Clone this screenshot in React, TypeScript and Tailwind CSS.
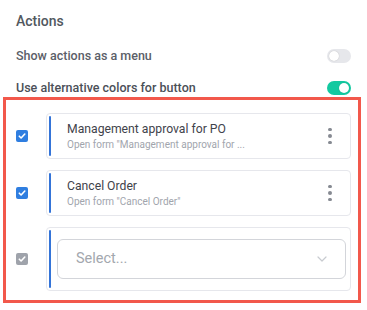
import React from "react";

const Toggle = ({ on }: { on: boolean }) => (
  <div
    className={`flex h-[14px] w-[24px] items-center rounded-full px-[2px] ${
      on ? "justify-end bg-[#13c9a0]" : "justify-start bg-[#e6e7eb]"
    }`}
  >
    <div className="h-[10px] w-[10px] rounded-full bg-white shadow-[0_0_1px_rgba(0,0,0,0.25)]" />
  </div>
);

const Check = ({ muted }: { muted?: boolean }) => (
  <div
    className={`flex h-[12px] w-[12px] items-center justify-center rounded-[2px] ${
      muted ? "bg-[#9fa3ab]" : "bg-[#2f7ee0]"
    }`}
  >
    <svg width="8" height="8" viewBox="0 0 8 8" fill="none">
      <path d="M1.3 4.2 3.1 6 6.8 2" stroke="white" strokeWidth="1.6" strokeLinecap="round" strokeLinejoin="round" />
    </svg>
  </div>
);

const Kebab = () => (
  <div className="flex flex-col items-center gap-[3px]">
    <span className="h-[3.5px] w-[3.5px] rounded-full bg-[#868a92]" />
    <span className="h-[3.5px] w-[3.5px] rounded-full bg-[#868a92]" />
    <span className="h-[3.5px] w-[3.5px] rounded-full bg-[#868a92]" />
  </div>
);

const ActionCard = ({ title, sub }: { title: string; sub: string }) => (
  <div className="flex h-[46px] w-[305px] rounded-[4px] border border-[#e6e7ec] bg-white p-[2px]">
    <div className="w-[2px] rounded-full bg-[#3474d8]" />
    <div className="flex flex-1 flex-col justify-center pl-[16px] pt-[1px]">
      <div className="text-[12.2px] leading-[17px] text-[#3f434b]">{title}</div>
      <div className="text-[10px] leading-[14px] text-[#a1a5ad]">{sub}</div>
    </div>
    <div className="flex w-[36px] items-center justify-center">
      <Kebab />
    </div>
  </div>
);

const App = () => {
  return (
    <div
      className="h-[310px] w-[367px] overflow-hidden bg-white"
      style={{ fontFamily: "Roboto, 'Liberation Sans', sans-serif" }}
    >
      <div className="flex h-[42px] items-center px-4 text-[14px] font-medium text-[#525860]">
        Actions
      </div>
      <div className="flex h-[28px] items-center justify-between pl-4 pr-[16px] text-[12.5px] font-medium text-[#5b6068]">
        <span>Show actions as a menu</span>
        <Toggle on={false} />
      </div>
      <div className="mt-[9px] flex h-[18px] items-center justify-between pl-4 pr-[16px] text-[12.5px] font-medium text-[#4b5058]">
        <span>Use alternative colors for button</span>
        <Toggle on />
      </div>
      <div className="ml-[3px] flex h-[206px] w-[358px] flex-col gap-[11px] border-[3px] border-[#f2584b] pl-[10px] pt-[13px]">
        <div className="flex items-center gap-[18px]">
          <Check />
          <ActionCard
            title="Management approval for PO"
            sub={'Open form "Management approval for ...'}
          />
        </div>
        <div className="flex items-center gap-[18px]">
          <Check />
          <ActionCard title="Cancel Order" sub={'Open form "Cancel Order"'} />
        </div>
        <div className="flex items-center gap-[18px]">
          <Check muted />
          <div className="flex h-[64px] w-[305px] rounded-[4px] border border-[#e6e7ec] bg-white p-[2px]">
            <div className="w-[2px] rounded-full bg-[#3474d8]" />
            <div className="flex flex-1 items-center pl-[6px] pr-[2px]">
              <div className="flex h-[40px] w-full items-center justify-between rounded-[6px] border border-[#d3d5da] pl-[18px] pr-[18px]">
                <span className="text-[14.5px] text-[#a3a7ae]">Select...</span>
                <svg width="10" height="6" viewBox="0 0 10 6" fill="none">
                  <path d="M1 1l4 4 4-4" stroke="#c8cbd0" strokeWidth="1.2" strokeLinecap="round" strokeLinejoin="round" />
                </svg>
              </div>
            </div>
          </div>
        </div>
      </div>
    </div>
  );
};

export default App;
